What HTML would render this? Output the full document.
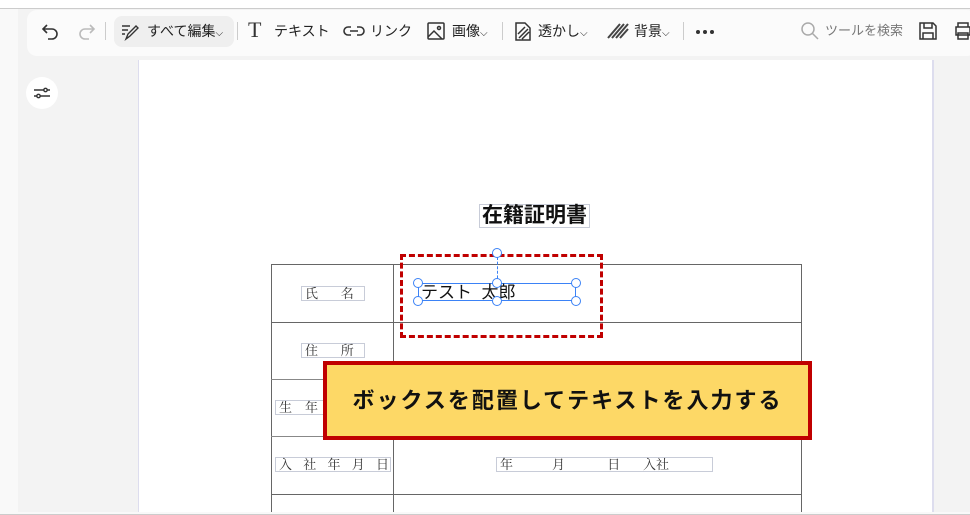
<!DOCTYPE html>
<html><head><meta charset="utf-8"><style>
*{box-sizing:border-box;margin:0;padding:0}
body{width:970px;height:515px;overflow:hidden;background:#fff;font-family:"Liberation Sans","Noto Sans CJK JP",sans-serif;position:relative;color:#222}
.a{position:absolute}
.lbl{position:absolute;border:1px solid #c8ccd8;font-family:"Liberation Serif","Noto Serif CJK SC",serif;font-size:13px;color:#333;line-height:13px;padding:0 3px;background:#fff;white-space:pre}
.tb{font-size:14px;color:#222;top:22px;line-height:18px}
.h{fill:#fff;stroke:#3b82f6;stroke-width:1}
</style></head><body>
<div class="a" style="left:0;top:8px;width:970px;height:507px;background:#f9f9f9;border-top:1px solid #ccc;border-bottom:1px solid #ccc"></div>
<div class="a" style="left:18px;top:9px;width:952px;height:503px;background:#f3f3f3"></div>
<div class="a" style="left:27px;top:10px;width:950px;height:46px;background:#fbfbfb;border-radius:10px"></div>
<div class="a" style="left:138px;top:60px;width:796px;height:452px;background:#fff;border-left:1px solid #dde;border-right:2px solid #dde;overflow:hidden">
<div class="a" style="left:132px;top:204px;width:531px;height:260px;border:1px solid #666"></div>
</div>
<!-- toolbar -->
<svg class="a" style="left:40px;top:20px" width="22" height="22" viewBox="0 0 22 22" fill="none" stroke="#333" stroke-width="1.6"><path d="M7 5 3 9l4 4M3 9h9a5 5 0 010 10H8"/></svg>
<svg class="a" style="left:75px;top:20px" width="22" height="22" viewBox="0 0 22 22" fill="none" stroke="#bbb" stroke-width="1.6"><path d="M15 5l4 4-4 4M19 9h-9a5 5 0 000 10h4"/></svg>
<div class="a" style="left:105px;top:22px;width:1px;height:18px;background:#ccc"></div>
<div class="a" style="left:114px;top:16px;width:120px;height:31px;background:#efefef;border-radius:8px"></div>
<svg class="a" style="left:120px;top:22px" width="20" height="20" viewBox="0 0 20 20" fill="none" stroke="#333" stroke-width="1.4"><path d="M2 4h8M2 8h6M2 12h3M6 17l2-5 8-8 2 2-8 8z"/></svg>
<div class="a tb" style="left:147px">すべて編集<span style="font-size:10px">⌵</span></div>
<div class="a" style="left:237px;top:22px;width:1px;height:18px;background:#ccc"></div>
<div class="a" style="left:248px;top:17px;font-size:22px;font-family:'Liberation Serif',serif;color:#333">T</div>
<div class="a tb" style="left:274px">テキスト</div>
<svg class="a" style="left:343px;top:22px" width="22" height="18" viewBox="0 0 22 18" fill="none" stroke="#333" stroke-width="1.6"><path d="M8 5H5a4 4 0 000 8h3M14 5h3a4 4 0 010 8h-3M7 9h8"/></svg>
<div class="a tb" style="left:370px">リンク</div>
<svg class="a" style="left:426px;top:21px" width="20" height="20" viewBox="0 0 20 20" fill="none" stroke="#333" stroke-width="1.5"><rect x="2" y="2" width="16" height="16" rx="1"/><path d="M2 16l6-6 8 8"/><circle cx="13" cy="7" r="1.5"/></svg>
<div class="a tb" style="left:452px">画像<span style="font-size:10px">⌵</span></div>
<div class="a" style="left:502px;top:22px;width:1px;height:18px;background:#ccc"></div>
<svg class="a" style="left:513px;top:21px" width="20" height="21" viewBox="0 0 20 21" fill="none" stroke="#333" stroke-width="1.5"><path d="M3 2h9l5 5v12H3zM6 17l9-9M9 18l7-7M5 13l7-7"/></svg>
<div class="a tb" style="left:538px">透かし<span style="font-size:10px">⌵</span></div>
<svg class="a" style="left:607px;top:22px" width="22" height="18" viewBox="0 0 22 18" stroke="#444" stroke-width="2"><path d="M1 16 13 2M5 16 17 2M9 16 21 2M13 16 21 7"/></svg>
<div class="a tb" style="left:634px">背景<span style="font-size:10px">⌵</span></div>
<div class="a" style="left:683px;top:22px;width:1px;height:18px;background:#ccc"></div>
<svg class="a" style="left:695px;top:29px" width="20" height="6"><circle cx="3" cy="3" r="2" fill="#333"/><circle cx="10" cy="3" r="2" fill="#333"/><circle cx="17" cy="3" r="2" fill="#333"/></svg>
<svg class="a" style="left:800px;top:21px" width="20" height="20" viewBox="0 0 20 20" fill="none" stroke="#aaa" stroke-width="1.5"><circle cx="8" cy="8" r="6"/><path d="M12.5 12.5 18 18"/></svg>
<div class="a tb" style="left:825px;color:#777;font-size:13px">ツールを検索</div>
<svg class="a" style="left:918px;top:21px" width="20" height="20" viewBox="0 0 20 20" fill="none" stroke="#333" stroke-width="1.5"><path d="M2 2h13l3 3v13H2zM6 2v5h8V2M5 18v-6h10v6"/></svg>
<svg class="a" style="left:953px;top:21px" width="20" height="20" viewBox="0 0 20 20" fill="none" stroke="#333" stroke-width="1.5"><path d="M5 6V2h10v4M3 6h14v8H3zM5 12h10v6H5z"/></svg>
<div class="a" style="left:26px;top:77px;width:32px;height:32px;border-radius:50%;background:#fff"></div>
<svg class="a" style="left:32px;top:83px" width="20" height="20" viewBox="0 0 20 20" fill="none" stroke="#333" stroke-width="1.4"><path d="M2 7h10M15 7h3M2 13h3M8 13h10"/><circle cx="13.5" cy="7" r="1.7"/><circle cx="6.5" cy="13" r="1.7"/></svg>
<!-- document -->
<div class="a" style="left:479px;top:204px;border:1px solid #c8ccd8;font-size:21px;font-weight:bold;line-height:22px;padding:0 2px;color:#111">在籍証明書</div>
<div class="a" style="left:393px;top:264px;width:1px;height:248px;background:#666"></div>
<div class="a" style="left:271px;top:322px;width:531px;height:1px;background:#666"></div>
<div class="a" style="left:271px;top:379px;width:531px;height:1px;background:#888"></div>
<div class="a" style="left:271px;top:436px;width:531px;height:1px;background:#888"></div>
<div class="a" style="left:271px;top:494px;width:531px;height:1px;background:#666"></div>
<div class="lbl" style="left:301px;top:286px;width:64px">氏       名</div>
<div class="lbl" style="left:301px;top:343px;width:64px">住       所</div>
<div class="lbl" style="left:275px;top:400px;width:60px">生    年</div>
<div class="lbl" style="left:275px;top:457px;width:116px;letter-spacing:4px">入 社 年 月 日</div>
<div class="lbl" style="left:496px;top:457px;width:217px">年            月             日       入社</div>
<!-- selection -->
<div class="a" style="left:400px;top:254px;width:203px;height:84px;border:3px dashed #c00000"></div>
<div class="a" style="left:497px;top:257px;width:0;height:26px;border-left:1px dashed #3b82f6"></div>
<div class="a" style="left:418px;top:283px;width:158px;height:18px;border:1px solid #3b82f6"></div>
<div class="a" style="left:421px;top:282px;font-size:17px;color:#111;line-height:22px;white-space:pre">テスト  太郎</div>
<svg class="a" style="left:410px;top:245px" width="175" height="65"><g class="h"><circle cx="87" cy="8" r="4.5"/><circle cx="8" cy="38" r="4.5"/><circle cx="87" cy="38" r="4.5"/><circle cx="166" cy="38" r="4.5"/><circle cx="8" cy="56" r="4.5"/><circle cx="87" cy="56" r="4.5"/><circle cx="166" cy="56" r="4.5"/></g></svg>
<!-- callout -->
<div class="a" style="left:323px;top:361px;width:489px;height:79px;background:#fdd866;border:4px solid #c00000;font-size:22px;font-weight:bold;color:#111;text-align:center;line-height:71px;letter-spacing:2px">ボックスを配置してテキストを入力する</div>
</body></html>
